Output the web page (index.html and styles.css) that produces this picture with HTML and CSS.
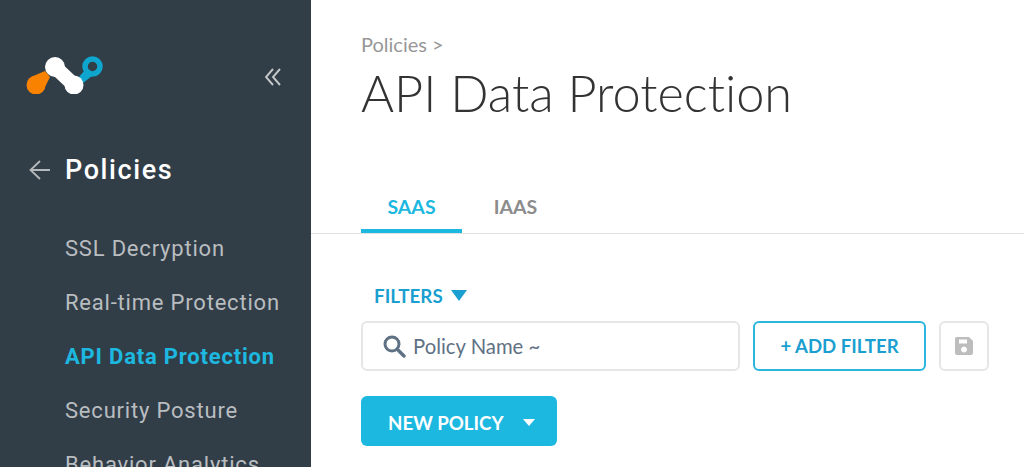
FILE: index.html
```html
<!DOCTYPE html>
<html lang="en">
<head>
<meta charset="utf-8">
<title>API Data Protection</title>
<link rel="stylesheet" href="styles.css">
</head>
<body>
<div class="app">
  <aside class="sidebar">
    <div class="brand">
      <svg class="logo" width="80" height="44" viewBox="24 50 80 44">
        <path d="M31 77 L45 71 L50 77 L43 91 Z" fill="#f98300"/>
        <circle cx="36" cy="85" r="9.5" fill="#f98300"/>
        <path d="M78 78 L85 70 L92 76 L83 83 Z" fill="#0ea5cf"/>
        <circle cx="92.5" cy="66.5" r="7.5" fill="#313e48" stroke="#0ea5cf" stroke-width="5.5"/>
        <path d="M55 67 L74 85" stroke="#fff" stroke-width="14.5" fill="none"/>
        <circle cx="55" cy="67" r="10" fill="#fff"/>
        <circle cx="74" cy="85" r="9.5" fill="#fff"/>
      </svg>
      <svg class="collapse" width="16" height="18" viewBox="0 0 16 18">
        <path d="M8 1 L1 9 L8 17 M15 1 L8 9 L15 17" fill="none" stroke="#c4c8ca" stroke-width="1.9"/>
      </svg>
    </div>
    <div class="section">
      <svg class="back" width="22" height="20" viewBox="0 0 22 20">
        <path d="M21 10 H1.5 M11 1 L1.5 10 L11 19" fill="none" stroke="#b5b9bb" stroke-width="1.8"/>
      </svg>
      <span class="section-title">Policies</span>
    </div>
    <nav class="menu">
      <a class="menu-item">SSL Decryption</a>
      <a class="menu-item">Real-time Protection</a>
      <a class="menu-item is-active">API Data Protection</a>
      <a class="menu-item">Security Posture</a>
      <a class="menu-item">Behavior Analytics</a>
    </nav>
  </aside>
  <main class="content">
    <header class="page-head">
      <div class="crumb">Policies &gt;</div>
      <h1 class="title">API Data Protection</h1>
    </header>
    <div class="tabs">
      <a class="tab is-active">SAAS</a>
      <a class="tab">IAAS</a>
    </div>
    <section class="panel">
      <div class="filters-toggle">FILTERS <span class="tri tri-blue"></span></div>
      <div class="filter-row">
        <div class="search">
          <svg width="24" height="24" viewBox="0 0 24 24">
            <circle cx="10" cy="10" r="7" fill="none" stroke="#5f7184" stroke-width="3"/>
            <path d="M15.5 15.5 L22 22" stroke="#5f7184" stroke-width="3.4" stroke-linecap="round"/>
          </svg>
          <span class="search-text">Policy Name ~</span>
        </div>
        <button class="add-filter">+ ADD FILTER</button>
        <button class="save">
          <svg width="20" height="20" viewBox="0 0 20 20">
            <path fill-rule="evenodd" fill="#bdbdbd" d="M2.5 1 H15 L19 5 V17 a2 2 0 0 1 -2 2 H3 a2 2 0 0 1 -2 -2 V2.5 a1.5 1.5 0 0 1 1.5 -1.5 Z M5 3.5 V7.5 H13 V3.5 Z M10 10.5 a3 3 0 1 0 0.01 0 Z"/>
          </svg>
        </button>
      </div>
      <button class="new-policy">NEW POLICY <span class="tri tri-white"></span></button>
    </section>
  </main>
</div>
</body>
</html>
```
FILE: styles.css
```css
* { box-sizing: border-box; }
html, body { margin: 0; height: 467px; overflow: hidden; background: #fff; }
.app { display: flex; width: 1024px; height: 467px; overflow: hidden; }

.sidebar {
  width: 311px;
  flex: none;
  height: 467px;
  overflow: hidden;
  background: #313e48;
  font-family: Roboto, sans-serif;
}
.brand {
  display: flex;
  align-items: center;
  justify-content: space-between;
  padding: 50px 30px 0 24px;
}
.logo { display: block; }
.collapse { display: block; margin-top: 9px; }
.section {
  display: flex;
  align-items: center;
  gap: 14px;
  margin-top: 56px;
  padding-left: 29px;
  height: 40px;
}
.back { display: block; }
.section-title {
  color: #fff;
  font-size: 27px;
  font-weight: 500;
  letter-spacing: 1.6px;
}
.menu { display: flex; flex-direction: column; padding: 32px 0 0 65px; }
.menu-item {
  height: 54px;
  line-height: 54px;
  color: #b9bdc0;
  font-size: 22px;
  letter-spacing: 0.8px;
  white-space: nowrap;
}
.menu-item.is-active { color: #1db8e0; font-weight: 700; }

.content { flex: 1; min-width: 0; font-family: Lato, sans-serif; }
.page-head { padding: 32px 0 0 50px; height: 185px; }
.crumb { color: #979797; font-size: 20px; line-height: 24px; }
.title {
  margin: 5px 0 0;
  color: #333;
  font-size: 50.5px;
  font-weight: 300;
  line-height: 64px;
  font-variant-ligatures: none;
}
.tabs {
  display: flex;
  height: 49px;
  padding-left: 50px;
  border-bottom: 1px solid #dfe1e2;
}
.tab {
  width: 101px;
  margin-right: 3px;
  color: #8c8c8c;
  font-size: 19.5px;
  font-weight: 700;
  line-height: 44px;
  text-align: center;
}
.tab.is-active { color: #1db8e0; border-bottom: 4px solid #1db8e0; height: 48px; }

.panel { padding: 48px 0 0 50px; }
.filters-toggle {
  display: flex;
  align-items: center;
  gap: 8px;
  height: 26px;
  padding-left: 13px;
  color: #1a9fd0;
  font-size: 18.8px;
  font-weight: 700;
}
.tri { display: inline-block; width: 0; height: 0; border-style: solid; border-color: transparent; }
.tri-blue { border-width: 11px 8px 0; border-top-color: #1a9fd0; }
.tri-white { border-width: 7px 6px 0; border-top-color: #fff; }
.filter-row { display: flex; gap: 13px; margin-top: 13px; }
.search {
  display: flex;
  align-items: center;
  gap: 7px;
  width: 379px;
  height: 50px;
  padding: 0 0 1px 19px;
  border: 2px solid #e6e6e6;
  border-radius: 6px;
  background: #fff;
}
.search svg { display: block; }
.search-text { color: #5f7184; font-size: 20.3px; }
.add-filter {
  width: 173px;
  height: 50px;
  padding: 0;
  border: 2px solid #2cb5de;
  border-radius: 6px;
  background: #fff;
  color: #1a9fd0;
  font-family: Lato, sans-serif;
  font-size: 18.6px;
  font-weight: 700;
}
.save {
  display: flex;
  align-items: center;
  justify-content: center;
  width: 50px;
  height: 50px;
  padding: 0;
  border: 2px solid #e6e6e6;
  border-radius: 6px;
  background: #fff;
}
.new-policy {
  display: flex;
  align-items: center;
  gap: 19px;
  width: 196px;
  height: 50px;
  margin-top: 25px;
  padding: 3px 0 0 27px;
  border: 0;
  border-radius: 6px;
  background: #1db8e0;
  color: #fff;
  font-family: Lato, sans-serif;
  font-size: 18.7px;
  font-weight: 700;
}
```
